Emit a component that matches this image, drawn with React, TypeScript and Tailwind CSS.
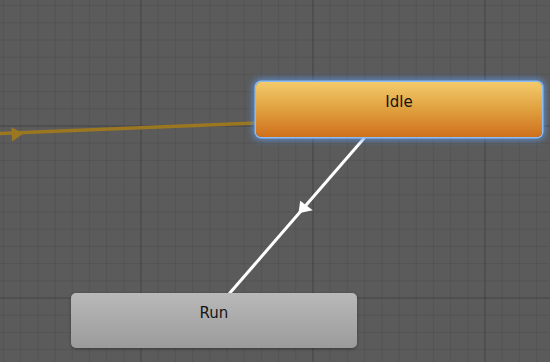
import React from "react";

const MINOR = 17.2;
const MAJOR = 172;

function GridLines() {
  const minorX: number[] = [];
  const minorY: number[] = [];
  for (let x = 141 - MINOR * 9; x < 560; x += MINOR) minorX.push(x);
  for (let y = 126 - MINOR * 8; y < 370; y += MINOR) minorY.push(y);
  const majorX = [141 - MAJOR, 141, 141 + MAJOR, 141 + MAJOR * 2];
  const majorY = [126 - MAJOR, 126, 126 + MAJOR];

  return (
    <svg className="absolute inset-0" width={550} height={362}>
      {minorX.map((x) => (
        <line key={"mx" + x} x1={x} y1={0} x2={x} y2={362} stroke="#000" strokeOpacity={0.07} strokeWidth={1} />
      ))}
      {minorY.map((y) => (
        <line key={"my" + y} x1={0} y1={y} x2={550} y2={y} stroke="#000" strokeOpacity={0.07} strokeWidth={1} />
      ))}
      {majorX.map((x) => (
        <line key={"Mx" + x} x1={x} y1={0} x2={x} y2={362} stroke="#000" strokeOpacity={0.17} strokeWidth={1} />
      ))}
      {majorY.map((y) => (
        <line key={"My" + y} x1={0} y1={y} x2={550} y2={y} stroke="#000" strokeOpacity={0.17} strokeWidth={1} />
      ))}
    </svg>
  );
}

function Transitions() {
  return (
    <svg className="absolute inset-0" width={550} height={362}>
      {/* entry transition into Idle */}
      <line x1={-2} y1={133.6} x2={258} y2={123} stroke="#9a7720" strokeWidth={3.5} />
      <polygon points="23.5,133.4 11.5,127.3 12,141.6" fill="#9a7720" />

      {/* Idle -> Run */}
      <line x1={366} y1={136} x2={229} y2={294} stroke="#ffffff" strokeWidth={3} />
      <polygon points="298.5,213.3 300.2,200.8 312.8,210.2" fill="#ffffff" />
    </svg>
  );
}

function StateNode({
  label,
  className,
}: {
  label: string;
  className: string;
}) {
  return (
    <div
      className={
        "absolute w-[286px] h-[55px] rounded-[5px] flex items-center justify-center pb-[15px] text-[15px] text-[#141414] font-['DejaVu_Sans',sans-serif] " +
        className
      }
    >
      {label}
    </div>
  );
}

export default function App() {
  return (
    <div className="relative w-[550px] h-[362px] overflow-hidden bg-[#5b5b5b]">
      <GridLines />
      <Transitions />

      <StateNode
        label="Idle"
        className="left-[256px] top-[82px] bg-gradient-to-b from-[#f3ca6a] via-[#e0a03e] to-[#cf6f1c] shadow-[0_0_0_1.5px_#8cbcf2,0_0_6px_3px_rgba(90,150,230,0.8)]"
      />
      <StateNode
        label="Run"
        className="left-[71px] top-[293px] bg-gradient-to-b from-[#b9b9b9] to-[#9b9b9b] shadow-[0_1px_3px_rgba(0,0,0,0.35)]"
      />
    </div>
  );
}
